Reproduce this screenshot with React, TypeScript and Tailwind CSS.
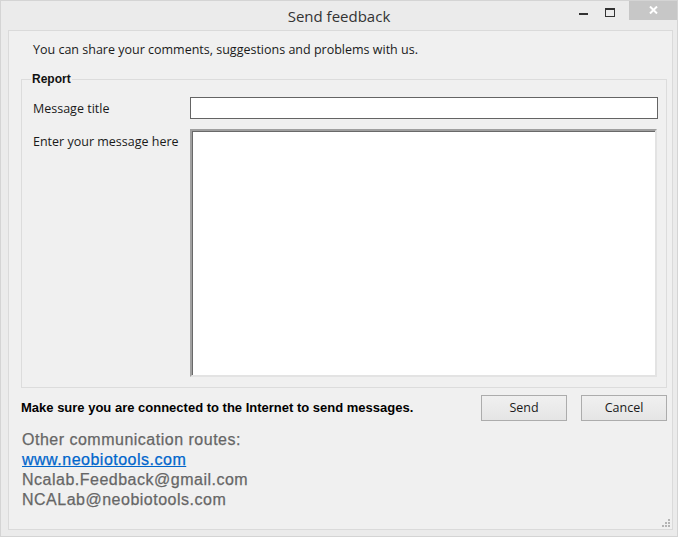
import React from 'react';

const grip = [
  [6, 0],
  [3, 3],
  [6, 3],
  [0, 6],
  [3, 6],
  [6, 6],
];

export default function App() {
  return (
    <div className="w-[678px] h-[537px] bg-[#ebebeb] border border-[#d4d4d4] flex flex-col font-['Open_Sans',sans-serif] overflow-hidden">
      {/* Title bar */}
      <div className="h-[29px] grid grid-cols-[1fr_auto_1fr]">
        <div />
        <div className="flex items-center text-[15px] text-[#333] pt-[1px]">Send feedback</div>
        <div className="flex justify-end items-start">
          <div className="w-[26px] h-[20px] flex items-center justify-center mr-[1px]">
            <div className="w-[9px] h-[2px] bg-[#333] mt-[6px]" />
          </div>
          <div className="w-[26px] h-[20px] flex items-center justify-center mr-[6px]">
            <div className="w-[10px] h-[9px] border border-[#333] border-t-2 mt-[2px]" />
          </div>
          <div className="w-[49px] h-[20px] bg-[#c7c7c7] flex items-center justify-center -mt-[1px] -mr-[1px]">
            <svg width="9" height="8" viewBox="0 0 9 8">
              <path d="M1 0.5 L8 7.5 M8 0.5 L1 7.5" stroke="#fff" strokeWidth="2" />
            </svg>
          </div>
        </div>
      </div>

      {/* Client area */}
      <div className="flex-1 ml-[7px] mr-[4px] mb-[6px] border border-[#dadada] bg-[#f0f0f0] relative flex flex-col">
        <p className="mt-[10px] ml-[24px] text-[12.5px] leading-[18px] text-[#1a1a1a]">
          You can share your comments, suggestions and problems with us.
        </p>

        <fieldset className="mt-[11px] ml-[12px] mr-[5px] border border-[#dcdcdc] h-[318px] pl-[11px] pr-[8px]">
          <legend className="ml-[-2px] px-[1px] text-[12px] font-bold font-['Liberation_Sans',sans-serif] text-[#111]">
            Report
          </legend>
          <div className="grid grid-cols-[157px_1fr] gap-y-[10px] mt-[9px]">
            <label className="pt-[2px] text-[12.5px] leading-[20px] text-[#1a1a1a]">Message title</label>
            <input className="h-[22px] border border-[#646464] bg-white outline-none" />
            <label className="pt-[2px] text-[12.5px] leading-[22px] text-[#1a1a1a]">Enter your message here</label>
            <textarea className="h-[248px] resize-none bg-white border-2 border-t-[#a0a0a0] border-l-[#a0a0a0] border-r-[#e3e3e3] border-b-[#e3e3e3] outline-none shadow-[inset_1px_1px_0_#696969] mr-[1px]" />
          </div>
        </fieldset>

        <div className="flex items-start mt-[7px] ml-[12px] mr-[5px]">
          <p className="flex-1 mt-[3px] text-[13px] font-bold font-['Liberation_Sans',sans-serif] text-black">
            Make sure you are connected to the Internet to send messages.
          </p>
          <button className="w-[86px] h-[26px] border border-[#acacac] bg-gradient-to-b from-[#f0f0f0] to-[#e5e5e5] text-[12.5px] text-[#1a1a1a]">
            Send
          </button>
          <button className="w-[86px] h-[26px] ml-[14px] border border-[#acacac] bg-gradient-to-b from-[#f0f0f0] to-[#e5e5e5] text-[12.5px] text-[#1a1a1a]">
            Cancel
          </button>
        </div>

        <div className="mt-[9px] ml-[13px] flex flex-col text-[16px] leading-[20px] tracking-[0.5px] font-['Liberation_Sans',sans-serif] text-[#666] [-webkit-text-stroke:0.25px_#666]">
          <span>Other communication routes:</span>
          <a className="text-[#0066cc] underline w-fit [-webkit-text-stroke:0.25px_#0066cc]">www.neobiotools.com</a>
          <span>Ncalab.Feedback@gmail.com</span>
          <span>NCALab@neobiotools.com</span>
        </div>

        {/* Resize grip */}
        <div className="absolute right-[2px] bottom-[2px] w-[8px] h-[8px]">
          {grip.map(([x, y], i) => (
            <div
              key={i}
              className="absolute w-[2px] h-[2px] bg-[#b4b4b4]"
              style={{ left: x, top: y }}
            />
          ))}
        </div>
      </div>
    </div>
  );
}
